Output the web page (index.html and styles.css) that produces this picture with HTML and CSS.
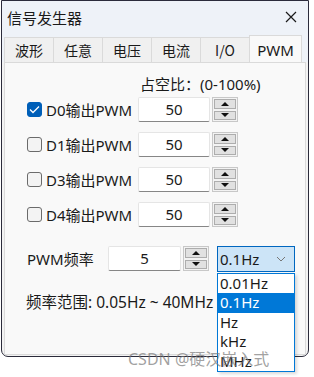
FILE: index.html
```html
<!DOCTYPE html>
<html lang="zh">
<head>
    <meta charset="UTF-8">
    <title>信号发生器</title>
    <link rel="stylesheet" href="styles.css">
</head>
<body>

<div class="window">
    <div class="titlebar">
        <span class="title">信号发生器</span>
        <svg class="close" width="12" height="12" viewBox="0 0 12 12">
            <path d="M1 1L11 11M11 1L1 11" stroke="#1a1a1a" stroke-width="1.2" fill="none"/>
        </svg>
    </div>

    <div class="tabs">
        <div class="tab">波形</div>
        <div class="tab">任意</div>
        <div class="tab">电压</div>
        <div class="tab">电流</div>
        <div class="tab">I/O</div>
        <div class="tab active">PWM</div>
    </div>

    <div class="panel">
        <div class="duty">占空比：(0-100%)</div>

        <div class="rows">
            <div class="row">
                <span class="check checked">
                    <svg width="11" height="9" viewBox="0 0 11 9"><path d="M1 4.5L4 7.5L10 1.5" stroke="#fff" stroke-width="1.3" fill="none"/></svg>
                </span>
                <span class="label">D0输出PWM</span>
                <div class="spinbox">
                    <div class="value">50</div>
                    <div class="spin"><div class="up"></div><div class="down"></div></div>
                </div>
            </div>
            <div class="row">
                <span class="check"></span>
                <span class="label">D1输出PWM</span>
                <div class="spinbox">
                    <div class="value">50</div>
                    <div class="spin"><div class="up"></div><div class="down"></div></div>
                </div>
            </div>
            <div class="row">
                <span class="check"></span>
                <span class="label">D3输出PWM</span>
                <div class="spinbox">
                    <div class="value">50</div>
                    <div class="spin"><div class="up"></div><div class="down"></div></div>
                </div>
            </div>
            <div class="row">
                <span class="check"></span>
                <span class="label">D4输出PWM</span>
                <div class="spinbox">
                    <div class="value">50</div>
                    <div class="spin"><div class="up"></div><div class="down"></div></div>
                </div>
            </div>
        </div>

        <div class="freq-row">
            <span class="freq-label">PWM频率</span>
            <div class="spinbox small">
                <div class="value">5</div>
                <div class="spin"><div class="up"></div><div class="down"></div></div>
            </div>
            <div class="select">
                <span>0.1Hz</span>
                <svg width="10" height="6" viewBox="0 0 10 6"><path d="M1 1L5 5L9 1" stroke="#777" stroke-width="1" fill="none"/></svg>
                <ul class="options">
                    <li>0.01Hz</li>
                    <li class="selected">0.1Hz</li>
                    <li>Hz</li>
                    <li>kHz</li>
                    <li>MHz</li>
                </ul>
            </div>
        </div>

        <div class="range">频率范围: 0.05Hz ~ 40MHz</div>
    </div>
</div>

<div class="watermark">CSDN @硬汉嵌入式</div>

</body>
</html>
```

FILE: styles.css
```css
body {
    margin: 0;
    background-color: #fff;
    font-family: "Segoe UI", "Noto Sans", "Noto Sans CJK SC", sans-serif;
    font-size: 14px;
    color: #1a1a1a;
    position: relative;
    width: 314px;
    height: 377px;
    overflow: hidden;
}

.window {
    width: 308px;
    height: 357px;
    background-color: #f3f3f3;
    border: 1px solid #2b2b3b;
    border-radius: 0 0 7px 7px;
    box-sizing: border-box;
    margin-left: 1px;
}

.titlebar {
    height: 32px;
    background-color: #eef2f8;
    display: flex;
    align-items: center;
    justify-content: space-between;
    padding: 0 11px 0 5px;
}

.title {
    font-size: 15px;
    font-family: "Noto Sans CJK SC", sans-serif;
}

.tabs {
    display: flex;
    padding: 2px 0 0 2px;
    height: 27px;
    align-items: flex-end;
    background-color: #eef2f8;
}

.tab {
    width: 50px;
    height: 25px;
    box-sizing: border-box;
    background-color: #f0f0f0;
    border: 1px solid #dadada;
    border-bottom: none;
    margin-right: -1px;
    display: flex;
    align-items: center;
    justify-content: center;
    font-size: 14px;
    font-family: "Noto Sans CJK SC", sans-serif;
}

.tab.active {
    width: 53px;
    height: 28px;
    background-color: #f9f9f9;
    font-family: "Segoe UI", "Noto Sans", sans-serif;
    font-size: 15px;
    position: relative;
    top: 1px;
}

.panel {
    margin: 0 2px;
    height: 293px;
    background-color: #f9f9f9;
    border: 1px solid #dadada;
    box-sizing: border-box;
    position: relative;
}

.duty {
    margin: 11px 0 0 135px;
    height: 20px;
    line-height: 20px;
    font-size: 15px;
}

.rows {
    display: flex;
    flex-direction: column;
    gap: 10px;
    margin-top: 3px;
}

.row {
    display: flex;
    align-items: center;
    height: 25px;
    padding-left: 22px;
}

.check {
    width: 15px;
    height: 15px;
    box-sizing: border-box;
    border: 1px solid #6b6b6b;
    border-radius: 3px;
    background-color: #f3f3f3;
    display: flex;
    align-items: center;
    justify-content: center;
}

.check.checked {
    background-color: #005fb8;
    border-color: #005fb8;
}

.label {
    width: 92px;
    margin-left: 4px;
    font-size: 15px;
}

.spinbox {
    display: flex;
    align-items: center;
    gap: 2px;
}

.value {
    width: 72px;
    height: 25px;
    box-sizing: border-box;
    background-color: #fff;
    border: 1px solid #e5e5e5;
    border-bottom: 1px solid #868686;
    border-radius: 2px;
    text-align: center;
    line-height: 23px;
    font-size: 15px;
}

.spin {
    width: 26px;
    height: 25px;
    display: flex;
    flex-direction: column;
    border: 1px solid #c8c8c8;
    box-sizing: border-box;
    background-color: #f3f3f3;
}

.up, .down {
    flex: 1;
    margin: 1px;
    background-color: #e1e1e1;
    border: 1px solid #adadad;
    position: relative;
}

.up::after, .down::after {
    content: "";
    position: absolute;
    left: 50%;
    top: 50%;
    margin-left: -4px;
    border-left: 4px solid transparent;
    border-right: 4px solid transparent;
}

.up::after {
    margin-top: -2px;
    border-bottom: 4px solid #111;
}

.down::after {
    margin-top: -2px;
    border-top: 4px solid #111;
}

.freq-row {
    display: flex;
    align-items: center;
    height: 25px;
    margin-top: 19px;
    padding-left: 22px;
}

.freq-label {
    width: 81px;
    font-size: 15px;
}

.spinbox.small .value {
    width: 73px;
}

.select {
    margin-left: 8px;
    width: 78px;
    height: 26px;
    box-sizing: border-box;
    background-color: #cce4f7;
    border: 1px solid #0067c0;
    display: flex;
    align-items: center;
    justify-content: space-between;
    padding: 0 8px 0 2px;
    font-size: 15px;
    position: relative;
}

.options {
    position: absolute;
    left: -1px;
    top: 26px;
    width: 78px;
    margin: 0;
    padding: 0;
    list-style: none;
    background-color: #fff;
    border: 1px solid #0078d7;
    box-sizing: border-box;
    box-shadow: 2px 2px 3px rgba(0, 0, 0, 0.15);
    z-index: 2;
}

.options li {
    height: 19.5px;
    line-height: 19px;
    padding-left: 2px;
    font-size: 15px;
}

.options li.selected {
    background-color: #0078d7;
    color: #fff;
}

.range {
    margin: 19px 0 0 21px;
    font-size: 15.5px;
}

.watermark {
    position: absolute;
    left: 128px;
    top: 346px;
    font-size: 16px;
    color: rgba(120, 120, 120, 0.7);
    z-index: 3;
}
```
